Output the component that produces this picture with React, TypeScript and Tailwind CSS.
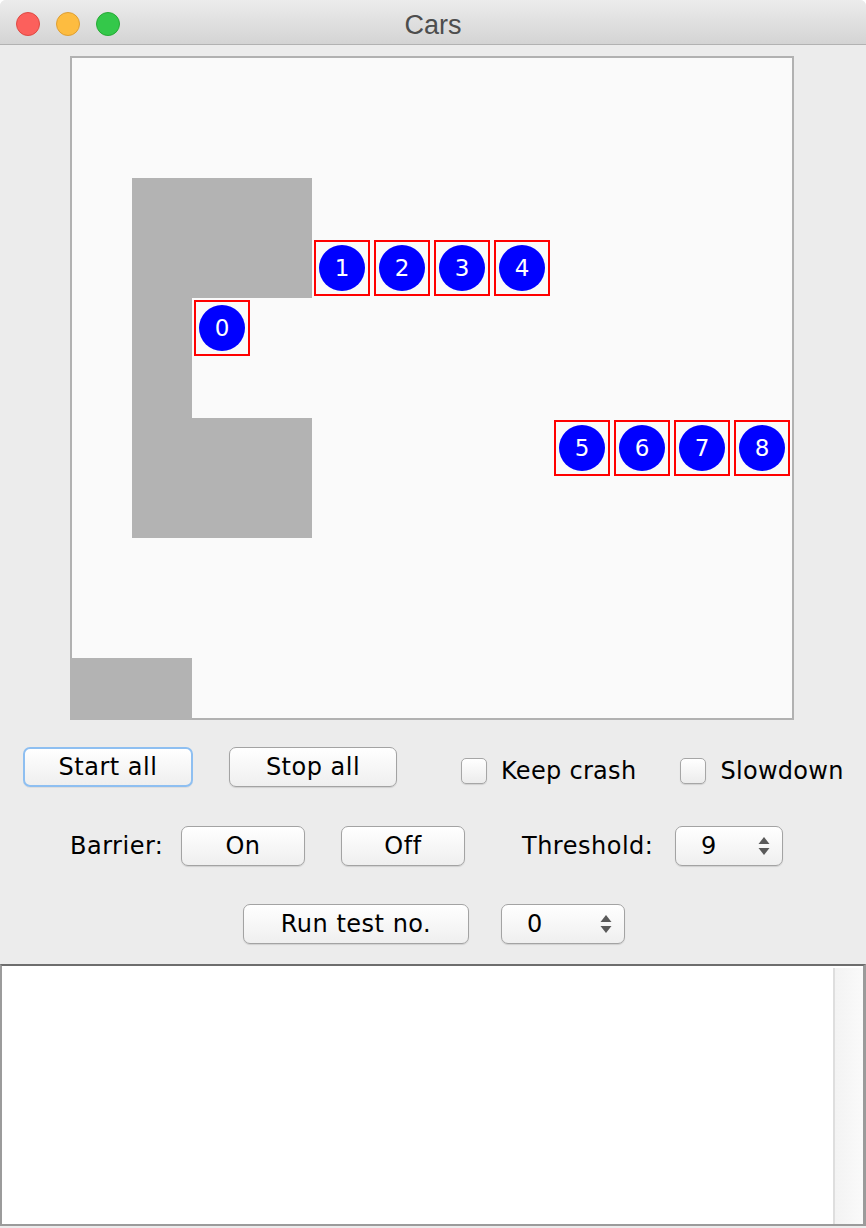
import React from 'react'

const cars = [
  { n: 0, col: 2, row: 4 },
  { n: 1, col: 4, row: 3 },
  { n: 2, col: 5, row: 3 },
  { n: 3, col: 6, row: 3 },
  { n: 4, col: 7, row: 3 },
  { n: 5, col: 8, row: 6 },
  { n: 6, col: 9, row: 6 },
  { n: 7, col: 10, row: 6 },
  { n: 8, col: 11, row: 6 },
]

function MacButton({ label, width, focused }: { label: string; width: string; focused?: boolean }) {
  return (
    <button
      className={
        focused
          ? `${width} h-[40px] rounded-[7px] border-2 border-[#8ebff1] bg-linear-to-b from-white to-[#efefef] text-[24px] tracking-[0.5px] leading-none text-black shadow-[0_1px_0_rgba(0,0,0,0.06)]`
          : `${width} h-[40px] rounded-[7px] border border-[#a3a3a3] bg-linear-to-b from-white to-[#efefef] text-[24px] tracking-[0.5px] leading-none text-black shadow-[0_1px_1px_rgba(0,0,0,0.12)]`
      }
    >
      {label}
    </button>
  )
}

function Check({ label }: { label: string }) {
  return (
    <label className="flex items-center">
      <span className="w-[26px] h-[26px] rounded-[5px] border border-[#a6a6a6] bg-linear-to-b from-white to-[#ececec] shadow-[0_1px_1px_rgba(0,0,0,0.12)]" />
      <span className="ml-[14px] text-[24px] tracking-[0.3px] leading-[26px] text-black">{label}</span>
    </label>
  )
}

function Spinner({ value, width }: { value: string; width: string }) {
  return (
    <div className={`${width} h-[40px] rounded-[7px] border border-[#a3a3a3] bg-linear-to-b from-white to-[#efefef] shadow-[0_1px_1px_rgba(0,0,0,0.12)] flex items-center justify-between pl-[25px] pr-[12px]`}>
      <span className="text-[24px] leading-none text-black">{value}</span>
      <svg width="12" height="22" viewBox="0 0 12 22">
        <path d="M6 2 L11.5 9 L0.5 9 Z" fill="#5a5a5a" />
        <path d="M0.5 13 L11.5 13 L6 20 Z" fill="#5a5a5a" />
      </svg>
    </div>
  )
}

export default function App() {
  return (
    <div className="w-[866px] h-[1228px] bg-white font-['DejaVu_Sans',sans-serif]">
      <div className="w-[866px] h-[1228px] bg-[#ececec] rounded-t-[6px] overflow-hidden flex flex-col">
        {/* title bar */}
        <div className="relative h-[45px] shrink-0 pt-[6px] bg-linear-to-b from-[#ececec] to-[#d4d4d4] border-b border-[#b2b2b2] flex items-center justify-center">
          <div className="absolute left-[16px] top-[12px] flex gap-[16px]">
            <span className="w-[24px] h-[24px] rounded-full bg-[#fc605c] border border-[#de4a43]" />
            <span className="w-[24px] h-[24px] rounded-full bg-[#fdbc40] border border-[#de9f34]" />
            <span className="w-[24px] h-[24px] rounded-full bg-[#34c84a] border border-[#27aa35]" />
          </div>
          <span className="font-['Liberation_Sans',sans-serif] text-[27px] leading-none text-[#4d4d4d]">Cars</span>
        </div>

        {/* track canvas */}
        <div className="relative ml-[70px] mt-[11px] w-[724px] h-[664px] shrink-0 bg-[#fafafa] border-2 border-[#b1b1b1]">
          <div className="absolute left-[60px] top-[120px] w-[180px] h-[120px] bg-[#b3b3b3]" />
          <div className="absolute left-[60px] top-[240px] w-[60px] h-[120px] bg-[#b3b3b3]" />
          <div className="absolute left-[60px] top-[360px] w-[180px] h-[120px] bg-[#b3b3b3]" />
          <div className="absolute left-[-2px] top-[600px] w-[122px] h-[62px] bg-[#b3b3b3]" />
          {cars.map(c => (
            <div
              key={c.n}
              className="absolute w-[56px] h-[56px] border-2 border-[#ff0000] flex items-center justify-center"
              style={{ left: c.col * 60 + 2, top: c.row * 60 + 2 }}
            >
              <div className="w-[46px] h-[46px] rounded-full bg-[#0000ff] flex items-center justify-center text-white text-[23px] leading-none">
                {c.n}
              </div>
            </div>
          ))}
        </div>

        {/* row 1 */}
        <div className="flex items-start h-[40px] mt-[27px] shrink-0">
          <div className="ml-[23px]"><MacButton label="Start all" width="w-[170px]" focused /></div>
          <div className="ml-[36px]"><MacButton label="Stop all" width="w-[168px]" /></div>
          <div className="ml-[64px] mt-[11px]"><Check label="Keep crash" /></div>
          <div className="ml-[44px] mt-[11px]"><Check label="Slowdown" /></div>
        </div>

        {/* row 2 */}
        <div className="flex items-center h-[41px] mt-[38px] shrink-0">
          <span className="ml-[70px] w-[111px] text-[24px] tracking-[0.5px] text-black">Barrier:</span>
          <MacButton label="On" width="w-[124px]" />
          <div className="ml-[36px]"><MacButton label="Off" width="w-[124px]" /></div>
          <span className="ml-[57px] w-[153px] text-[24px] tracking-[0.5px] text-black">Threshold:</span>
          <Spinner value="9" width="w-[108px]" />
        </div>

        {/* row 3 */}
        <div className="flex items-center h-[41px] mt-[37px] shrink-0">
          <div className="ml-[243px]"><MacButton label="Run test no." width="w-[226px]" /></div>
          <div className="ml-[32px]"><Spinner value="0" width="w-[124px]" /></div>
        </div>

        {/* output area */}
        <div className="mt-[20px] h-[262px] shrink-0 flex bg-white border-t-2 border-t-[#6d6d6d] border-l-2 border-l-[#9b9b9b] border-b-2 border-b-[#9b9b9b] border-r-[3px] border-r-[#9b9b9b]">
          <div className="flex-1" />
          <div className="w-[30px] mt-[2px] border-l-2 border-[#dedede] bg-linear-to-r from-[#f3f3f3] to-[#fafafa]" />
        </div>
      </div>
    </div>
  )
}
